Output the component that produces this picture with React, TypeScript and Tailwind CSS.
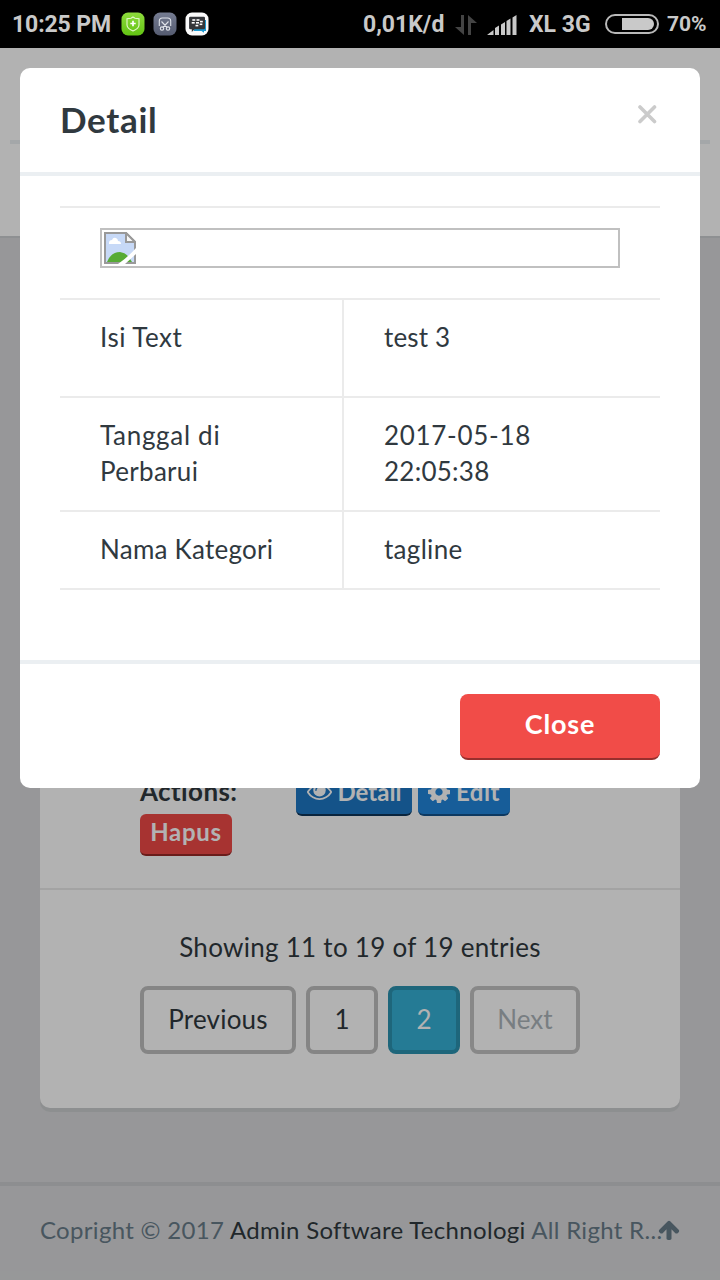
import React from 'react';

type IconProps = { className?: string };

const EyeIcon = ({ className }: IconProps) => (
  <svg viewBox="0 256 1792 1408" fill="currentColor" className={className}>
    <path d="M1664 960q-152-236-381-353 61 104 61 225 0 185-131.500 316.500t-316.500 131.500-316.500-131.500-131.500-316.500q0-121 61-225-229 117-381 353 133 205 333.500 326.500t434.500 121.500 434.500-121.500 333.500-326.500zm-720-384q0-20-14-34t-34-14q-125 0-214.500 89.500t-89.500 214.500q0 20 14 34t34 14 34-14 14-34q0-86 61-147t147-61q20 0 34-14t14-34zm848 384q0 34-20 69-140 230-376.500 368.500t-499.500 138.500-499.500-139-376.500-368q-20-35-20-69t20-69q140-229 376.500-368t499.500-139 499.500 139 376.500 368q20 35 20 69z" />
  </svg>
);

const CogIcon = ({ className }: IconProps) => (
  <svg viewBox="0 128 1536 1536" fill="currentColor" className={className}>
    <path d="M1024 896q0-106-75-181t-181-75-181 75-75 181 75 181 181 75 181-75 75-181zm512-109v222q0 12-8 23t-20 13l-185 28q-19 54-39 91 35 50 107 138 10 12 10 25t-9 23q-27 37-99 108t-94 71q-12 0-26-9l-138-108q-44 23-91 38-16 136-29 186-7 28-36 28h-222q-14 0-24.500-8.500t-11.500-21.500l-28-184q-49-16-90-37l-141 107q-10 9-25 9-14 0-25-11-126-114-165-168-7-10-7-23 0-12 8-23 15-21 51-66.500t54-70.500q-27-50-41-99l-183-27q-13-2-21-12.500t-8-23.500v-222q0-12 8-23t19-13l186-28q14-46 39-92-40-57-107-138-10-12-10-24 0-10 9-23 26-36 98.500-107.500t94.500-71.500q13 0 26 10l138 107q44-23 91-38 16-136 29-186 7-28 36-28h222q14 0 24.500 8.500t11.500 21.500l28 184q49 16 90 37l142-107q9-9 24-9 13 0 25 10 129 119 165 170 7 8 7 22 0 12-8 23-15 21-51 66.500t-54 70.500q26 50 41 98l183 28q13 2 21 12.500t8 23.500z" />
  </svg>
);

const ArrowUpIcon = ({ className }: IconProps) => (
  <svg viewBox="64 128 1664 1536" fill="currentColor" className={className}>
    <path d="M1675 971q0 51-37 90l-75 75q-38 38-91 38-54 0-90-38l-294-293v704q0 52-37.500 84.500t-90.500 32.500h-128q-53 0-90.500-32.500t-37.500-84.500v-704l-294 293q-36 38-90 38t-90-38l-75-75q-38-38-38-90 0-53 38-91l651-651q35-37 90-37 54 0 91 37l651 651q37 39 37 91z" />
  </svg>
);

const ShieldApp = () => (
  <svg viewBox="0 0 24 24" className="h-6 w-6">
    <defs>
      <linearGradient id="shield" x1="0" y1="0" x2="0" y2="1">
        <stop offset="0" stopColor="#8edb3c" />
        <stop offset="1" stopColor="#62c313" />
      </linearGradient>
    </defs>
    <rect x="0.500" y="0.500" width="23" height="23" rx="6.500" fill="url(#shield)" />
    <path d="M12 5l2 1.200 4 .5v6.300c0 2.500-2.800 4.600-6 6-3.200-1.400-6-3.500-6-6V6.700l4-.5z" fill="none" stroke="#e6f8cf" strokeWidth="1.100" />
    <path d="M12 8.800v5.400M9.300 11.500h5.400" stroke="#fff" strokeWidth="1.700" />
  </svg>
);

const ScissorsApp = () => (
  <svg viewBox="0 0 24 24" className="h-6 w-6">
    <defs>
      <linearGradient id="scissors" x1="0" y1="0" x2="0" y2="1">
        <stop offset="0" stopColor="#757c91" />
        <stop offset="1" stopColor="#555b70" />
      </linearGradient>
    </defs>
    <rect x="0.500" y="0.500" width="23" height="23" rx="6.500" fill="url(#scissors)" />
    <g fill="none" stroke="#dfe2e9" strokeWidth="1.100">
      <path d="M6.300 14V9q0-3 3-3h5.400q3 0 3 3v5M8.500 9.500l5.700 6M15.500 9.500l-5.700 6" />
      <circle cx="9" cy="16.600" r="1.700" />
      <circle cx="15" cy="16.600" r="1.700" />
    </g>
  </svg>
);

const MessengerApp = () => (
  <svg viewBox="0 0 24 24" className="h-6 w-6">
    <rect x="0.500" y="0.500" width="23" height="23" rx="6.500" fill="#fafafa" />
    <path d="M6.500 8H21v11h-2v1.800L16.500 19H9z" fill="#1b9ad2" />
    <path d="M5.300 4.800h13.500q1.200 0 1.200 1.200v10q0 1.200-1.200 1.200H9.500L6.800 20v-2.800H5.300q-1.200 0-1.200-1.200V6q0-1.200 1.200-1.200z" fill="#34363a" />
    <g fill="#fff">
      <rect x="7.300" y="7.200" width="3" height="1.600" /><rect x="11.500" y="7.200" width="3" height="1.600" />
      <rect x="6.700" y="10" width="3" height="1.600" /><rect x="11" y="10" width="3" height="1.600" /><rect x="15" y="8.800" width="2.800" height="1.600" />
      <rect x="10.500" y="12.800" width="2.800" height="1.600" /><rect x="14.600" y="11.500" width="2.700" height="1.600" />
    </g>
  </svg>
);

const BrokenImage = () => (
  <svg viewBox="0 0 32 32" className="h-8 w-8">
    <path d="M1 1h21l9 9v21H1z" fill="#c7d9f7" stroke="#999" strokeWidth="2" />
    <path d="M5 11q0-3 3-3 1-3 4-2 2 1 2 3 3 0 3 3H5z" fill="#fff" />
    <path d="M3 30q4-10 13-10 8 1 12 10z" fill="#57ab35" />
    <path d="M22 1v9h9z" fill="#f8f8f8" stroke="#999" strokeWidth="2" />
    <path d="M32 16v6L21 32h-7q9-6 18-16z" fill="#fff" />
  </svg>
);

function StatusBar() {
  return (
    <header className="flex h-12 items-center bg-black pt-[2px] pr-3 pl-3 font-['Roboto',sans-serif] text-[23px] font-bold text-[#c9c9c9]">
      <span className="w-[100px] whitespace-nowrap tracking-[-0.120px]">10:25 PM</span>
      <div className="mb-[2px] ml-[9px] flex gap-2">
        <ShieldApp />
        <ScissorsApp />
        <MessengerApp />
      </div>
      <span className="ml-[154px] w-[83px] whitespace-nowrap">0,01K/d</span>
      <svg viewBox="0 0 22 20" className="ml-[9px] h-5 w-[22px]" fill="#444">
        <path d="M6 0h3v20L0 12h6zM13 20V0l9 8h-6v12z" />
      </svg>
      <svg viewBox="0 0 30 20" className="ml-[10px] h-5 w-[30px]" fill="#c9c9c9">
        <path d="M0 20l6.500-5v5zM8 13l4-2.500V20H8zM14 9.500l4-2.500v13h-4zM19.500 6l4-2.500V20h-4zM25.500 2.500l4-2.500v20h-4z" />
      </svg>
      <span className="ml-3 w-[66px] whitespace-nowrap">XL 3G</span>
      <svg viewBox="0 0 54 20" className="mb-[2px] ml-[10px] h-5 w-[54px]">
        <rect x="1" y="1" width="52" height="18" rx="9" fill="none" stroke="#b9b9b9" strokeWidth="2" />
        <path d="M17 4h26a6 6 0 010 12H17z" fill="#c9c9c9" />
      </svg>
      <span className="ml-2 whitespace-nowrap text-[21px]">70%</span>
    </header>
  );
}

function Page() {
  const pageButton = 'flex h-[68px] items-center justify-center rounded-lg border-4 pb-[2px]';
  return (
    <div className="flex h-full flex-col bg-[#d8d9db]">
      <div className="h-[188px] shrink-0 bg-white px-[10px] pt-[92px]">
        <div className="h-1 bg-[#ebeff2]" />
      </div>
      <div className="h-[2px] shrink-0 bg-[#cccfd2]" />
      <main className="mx-10 flex h-[870px] shrink-0 flex-col rounded-b-[10px] bg-white shadow-[0_4px_0_#cbcdcf]">
        <div className="h-[652px] border-b-2 border-[#eaeaea] pt-[534px] pl-[100px]">
          <div className="flex h-[42px] items-start">
            <b className="w-[156px] pt-1 text-[26px] leading-[30px] tracking-[0.400px]">Actions:</b>
            <button className="mr-[6px] flex h-[44px] w-[116px] items-center justify-center gap-[6px] rounded-md border-b-2 border-[#0d3458] bg-[#1e77c4] pb-[3px] text-[24px] font-bold text-white">
              <EyeIcon className="h-5 w-[25px]" />Detail
            </button>
            <button className="flex h-[44px] w-[92px] items-center justify-center gap-[6px] rounded-md border-b-2 border-[#13528c] bg-[#2286dc] pb-[3px] text-[24px] font-bold tracking-[0.500px] text-white">
              <CogIcon className="h-[22px] w-[22px]" />Edit
            </button>
          </div>
          <button className="flex h-[42px] w-[92px] items-center justify-center rounded-md border-b-2 border-[#982926] bg-[#f04a47] pb-1 text-[24px] font-bold tracking-[0.700px] text-white">Hapus</button>
        </div>
        <p className="mt-[37px] text-center text-[26px] leading-[40px] tracking-[0.280px]">Showing 11 to 19 of 19 entries</p>
        <div className="mt-[19px] flex justify-center gap-[10px] text-[26px]">
          <button className={`${pageButton} w-[156px] border-[#bfbfbf] tracking-[0.200px]`}>Previous</button>
          <button className={`${pageButton} w-[72px] border-[#bfbfbf]`}>1</button>
          <button className={`${pageButton} w-[72px] border-[#2c92b0] bg-[#36b0d6] text-white`}>2</button>
          <button className={`${pageButton} w-[110px] border-[#c3c3c3] text-[#adb5ba]`}>Next</button>
        </div>
      </main>
      <footer className="mt-[74px] flex h-[98px] shrink-0 items-center border-t-4 border-[#cacccf] pr-10 pb-[7px] pl-10 text-[24px] text-[#687b89]">
        <p className="w-[618px] whitespace-nowrap tracking-[0.310px]">Copright © 2017 <span className="text-[#30393e]">Admin Software Technologi</span> All Right R...</p>
        <ArrowUpIcon className="h-5 w-[22px] shrink-0" />
      </footer>
    </div>
  );
}

function DetailModal() {
  return (
    <section className="mx-5 mt-5 flex h-[720px] flex-col rounded-[10px] bg-white text-[#30393f]">
      <div className="flex h-[108px] justify-between border-b-4 border-[#ebeff2] pr-[43px] pl-10">
        <h1 className="pt-[29px] text-[35px] leading-[44px] font-bold tracking-[0.700px]">Detail</h1>
        <svg viewBox="0 0 20 20" className="mt-9 h-5 w-5" stroke="#cbcbcb" strokeWidth="3.600" strokeLinecap="round"><path d="M3 3l14.500 14.500M17.500 3L3 17.500" /></svg>
      </div>
      <div className="mx-10 mt-[30px] border-y-2 border-[#ebebeb] text-[26px] leading-9">
        <div className="h-[90px] px-10 pt-5">
          <div className="flex h-10 items-center border-2 border-[#c0c0c0] px-[2px]"><BrokenImage /></div>
        </div>
        <div className="flex h-[98px] border-t-2 border-[#ebebeb]">
          <div className="w-[284px] border-r-2 border-[#ebebeb] pt-[19px] pl-10 tracking-[0.500px]">Isi Text</div>
          <div className="pt-[19px] pl-10 tracking-[0.150px]">test 3</div>
        </div>
        <div className="flex h-[114px] border-t-2 border-[#ebebeb]">
          <div className="w-[284px] border-r-2 border-[#ebebeb] pt-[19px] pl-10"><span className="tracking-[0.700px]">Tanggal di</span><br /><span className="tracking-[0.300px]">Perbarui</span></div>
          <div className="pt-[19px] pl-10"><span className="tracking-[0.700px]">2017-05-18</span><br /><span className="tracking-[0.250px]">22:05:38</span></div>
        </div>
        <div className="flex h-[78px] border-t-2 border-[#ebebeb]">
          <div className="w-[284px] border-r-2 border-[#ebebeb] pt-[19px] pl-10 tracking-[0.250px]">Nama Kategori</div>
          <div className="pt-[19px] pl-10 tracking-[0.300px]">tagline</div>
        </div>
      </div>
      <div className="mt-auto flex h-[128px] justify-end border-t-4 border-[#ebeff2] pt-[30px] pr-10">
        <button className="h-[66px] w-[200px] rounded-lg border-b-2 border-[#982f2d] bg-[#f14c48] pb-1 text-[27px] font-bold tracking-[0.800px] text-white">Close</button>
      </div>
    </section>
  );
}

export default function App() {
  return (
    <div className="flex h-[1280px] w-[720px] flex-col overflow-hidden font-['Lato',sans-serif] text-[#30393e]">
      <StatusBar />
      <div className="relative h-[1232px]">
        <Page />
        <div className="absolute inset-0 bg-black/30">
          <DetailModal />
        </div>
      </div>
    </div>
  );
}
